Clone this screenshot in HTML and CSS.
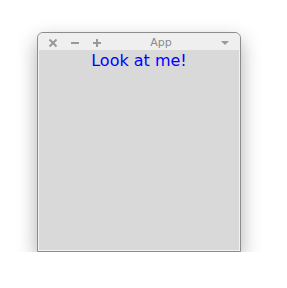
FILE: index.html
```html
<!DOCTYPE html>
<html lang="en">
<head>
  <meta charset="UTF-8">
  <title>App</title>
  <link rel="stylesheet" href="styles.css">
</head>
<body>
  <div class="window">
    <div class="titlebar">
      <div class="controls">
        <svg class="ctl" width="10" height="10" viewBox="0 0 10 10"><path d="M1.5 1.5 L8.5 8.5 M8.5 1.5 L1.5 8.5" stroke="#999999" stroke-width="2"/></svg>
        <svg class="ctl" width="10" height="10" viewBox="0 0 10 10"><path d="M1 5 H9" stroke="#999999" stroke-width="2"/></svg>
        <svg class="ctl" width="10" height="10" viewBox="0 0 10 10"><path d="M1 5 H9 M5 1 V9" stroke="#999999" stroke-width="2"/></svg>
      </div>
      <div class="title">App</div>
      <svg class="menu" width="10" height="10" viewBox="0 0 10 10"><path d="M1 3 H9 L5 7 Z" fill="#999999"/></svg>
    </div>
    <div class="content">
      <p class="label">Look at me!</p>
    </div>
  </div>
</body>
</html>
```

FILE: styles.css
```css
* { box-sizing: border-box; margin: 0; padding: 0; }
body {
  background: #ffffff;
  font-family: "DejaVu Sans", sans-serif;
  padding: 32px 0 0 37px;
}
.window {
  width: 204px;
  height: 220px;
  border: 1px solid #8c8c8c;
  border-radius: 6px 6px 0 0;
  background: #d9d9d9;
  box-shadow: 0 8px 20px rgba(0, 0, 0, 0.32);
  display: flex;
  flex-direction: column;
  overflow: hidden;
}
.titlebar {
  height: 17px;
  background: #efefef;
  display: flex;
  align-items: center;
  padding: 2px 10px 0 10px;
}
.controls {
  display: flex;
  gap: 12px;
}
.title {
  flex: 1;
  text-align: center;
  font-size: 11px;
  color: #8a8a8a;
}
.content {
  flex: 1;
  border: 1px solid #f2f2f2;
  border-top: none;
}
.label {
  text-align: center;
  color: #0000ff;
  font-size: 16px;
  line-height: 20px;
  padding-top: 1px;
}
```
